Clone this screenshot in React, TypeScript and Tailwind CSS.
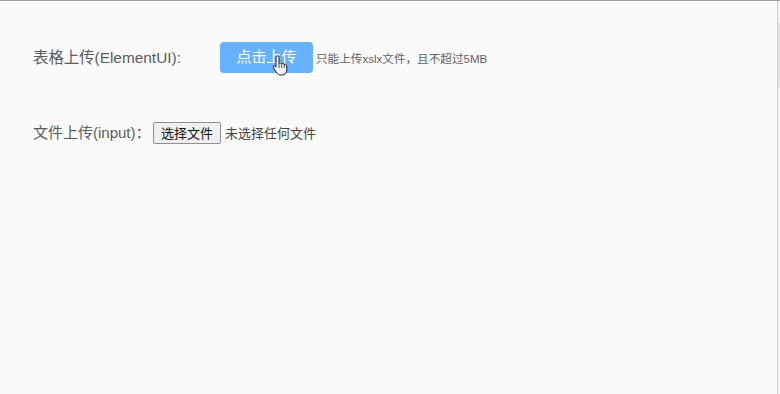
export default function App() {
  return (
    <div className="flex h-[394px] w-[780px] overflow-hidden border-t border-[#9a9a9a] bg-[#fafafa] font-['Liberation_Sans','Noto_Sans_CJK_SC',sans-serif]">
      <div className="flex-1 border-r border-[#cfcfcf] pl-[33px] pt-[41px]">
        {/* 表格上传 */}
        <div className="flex items-center">
          <div className="w-[187px] text-[15.4px] text-[#5a5c60]">表格上传(ElementUI):</div>
          <div className="relative">
            <button className="flex h-[31px] w-[93px] items-center justify-center rounded-[4px] bg-[#66b1ff] text-[15px] text-white">
              点击上传
            </button>
            <svg
              className="absolute left-[52px] top-[13px]"
              width="16"
              height="21"
              viewBox="0 0 16 21"
            >
              <path
                d="M5.5 1 C6.4 1 7 1.7 7 2.5 V8.5 C7.3 8.2 7.8 8 8.3 8 C9 8 9.5 8.4 9.7 9 C10 8.7 10.4 8.5 10.9 8.5 C11.6 8.5 12.2 9 12.3 9.6 C12.6 9.4 13 9.3 13.3 9.3 C14.1 9.3 14.7 9.9 14.7 10.7 V15 C14.7 18 12.8 20 10 20 H8.7 C7 20 5.8 19.3 4.9 18 L1.5 13 C1.1 12.4 1.2 11.6 1.8 11.2 C2.4 10.8 3.2 10.9 3.6 11.5 L4 12.1 V2.5 C4 1.7 4.6 1 5.5 1 Z"
                fill="#f4f4f4"
                stroke="#222"
                strokeWidth="1"
              />
              <path d="M9.7 9 V13 M12.3 9.6 V13 M7 8.5 V13" stroke="#222" strokeWidth="0.8" fill="none" />
            </svg>
          </div>
          <span className="ml-[3px] pt-[2px] text-[11.6px] text-[#606266]">只能上传xslx文件，且不超过5MB</span>
        </div>

        {/* 文件上传 */}
        <div className="mt-[49px] flex items-center">
          <span className="w-[120px] whitespace-nowrap text-[15px] text-[#5a5c60]">文件上传(input)：</span>
          <button className="h-[22px] w-[68px] rounded-[2px] border border-[#8f8f8f] bg-[#efefef] text-[13px] text-[#111]">
            选择文件
          </button>
          <span className="ml-[4px] text-[13px] text-[#444]">未选择任何文件</span>
        </div>
      </div>
      <div className="flex w-[2px] flex-col bg-[#f2f2f2]">
        <div className="mt-[22px] h-[64px] bg-[#e4e4e4]" />
      </div>
    </div>
  )
}
